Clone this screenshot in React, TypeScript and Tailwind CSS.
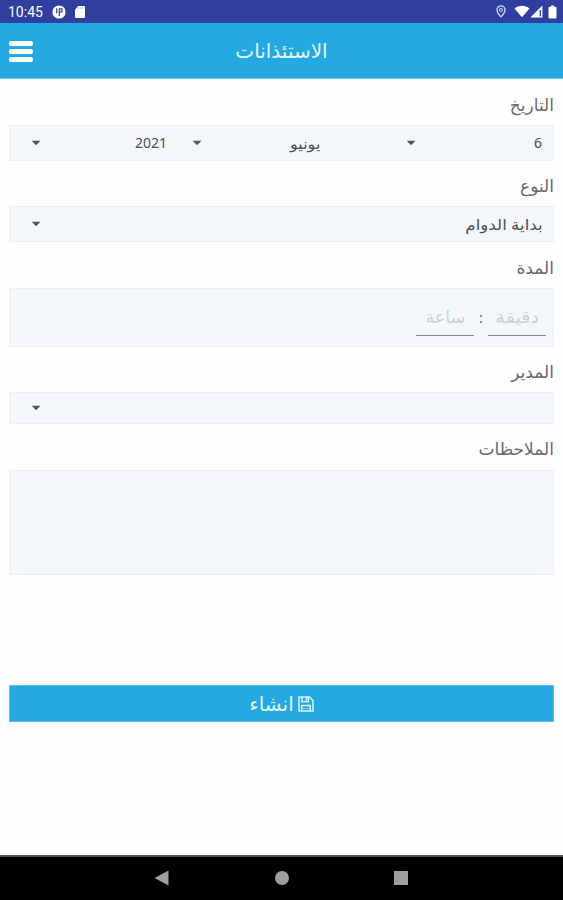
import React from 'react';

interface SelectProps {
  value?: string;
  className: string;
  textClass?: string;
}

const Caret = () => (
  <svg className="w-[10px] h-[6px] shrink-0" viewBox="0 0 10 6">
    <path d="M.7 .8h8.800L5.100 5.300z" fill="#50565b" />
  </svg>
);

const Select: React.FC<SelectProps> = ({ value, className, textClass = '' }) => (
  <div className={`flex items-center justify-between h-full text-[#4b4f52] ${className}`}>
    <span className={`leading-none whitespace-nowrap origin-right ${textClass}`}>{value}</span>
    <Caret />
  </div>
);

interface FieldProps {
  label: string;
  labelClass: string;
  boxClass: string;
  children?: React.ReactNode;
}

const Field: React.FC<FieldProps> = ({ label, labelClass, boxClass, children }) => (
  <div>
    <div className={`flex items-center text-[17px] text-[#66696b] leading-none ${labelClass}`}>
      <span className="origin-right">{label}</span>
    </div>
    <div className={`flex bg-[#f3f7fa] border border-[#ecf0f3] ${boxClass}`}>{children}</div>
  </div>
);

interface TimeInputProps {
  hint: string;
  hintClass: string;
}

const TimeInput: React.FC<TimeInputProps> = ({ hint, hintClass }) => (
  <div className="mt-[11px] h-[36px] w-[58px] pb-[3px] border-b border-[#858a8d] flex items-center justify-center text-[17px] leading-none text-[#cbd0d3]">
    <span className={hintClass}>{hint}</span>
  </div>
);

const StatusBar = () => (
  <div dir="ltr" className="h-[23px] bg-[#303f9f] flex items-center justify-between pl-2 pr-[6px] text-white">
    <div className="flex items-center">
      <span className="w-[44px] font-['Roboto',sans-serif] text-[14px] leading-none pt-px">10:45</span>
      <svg className="w-[14px] h-[14px]" viewBox="0 0 14 14">
        <circle cx="7" cy="7" r="6.600" fill="#fff" />
        <path d="M4.700 3.200v5M7.300 11V3.800H10v3.100H7.300" fill="none" stroke="#303f9f" strokeWidth="1.200" />
      </svg>
      <svg className="w-[12px] h-[14px] ml-2" viewBox="0 0 12 14">
        <path d="M4.300 1H10a1 1 0 0 1 1 1v10a1 1 0 0 1-1 1H2a1 1 0 0 1-1-1V4.400z" fill="#fff" />
        <path d="M4.700 2.400v1.300M6.700 2.400v1.300M8.700 2.400v1.300" stroke="#7d87c4" strokeWidth="0.800" />
      </svg>
    </div>
    <div className="flex items-center">
      <svg className="w-[10px] h-[13px] mr-[8px]" viewBox="0 0 10 13">
        <path d="M5 .9a4 4 0 0 0-4 4c0 2.700 4 7 4 7s4-4.300 4-7a4 4 0 0 0-4-4z" fill="none" stroke="#d6daf0" strokeWidth="1.300" />
        <circle cx="5" cy="4.900" r="1.500" fill="none" stroke="#d6daf0" />
      </svg>
      <svg className="w-[16px] h-[13px]" viewBox="0 0 16 13">
        <path d="M.5 3.400C4.700-.2 11.300-.2 15.500 3.400L8 12.300z" fill="#fff" />
      </svg>
      <svg className="w-[13px] h-[13px] mr-[5px]" viewBox="0 0 13 13">
        <path d="M12.400.5v12H.4z" fill="#fff" />
        <path d="M10.300 5v6.200" stroke="#303f9f" strokeWidth="1.300" />
      </svg>
      <svg className="w-[9px] h-[14px]" viewBox="0 0 9 14">
        <path d="M3 .5h3v1.200h1.500a1 1 0 0 1 1 1v9.800a1 1 0 0 1-1 1h-6a1 1 0 0 1-1-1V2.700a1 1 0 0 1 1-1H3z" fill="#fff" />
      </svg>
    </div>
  </div>
);

const Header = () => (
  <div dir="ltr" className="h-[56px] bg-[#24a9e2] border-b border-[#6fc5eb] grid grid-cols-[1fr_auto_1fr] items-center px-[9px]">
    <div className="flex flex-col gap-[3px] w-[24px] pt-px">
      <div className="h-[5px] rounded-[2px] bg-white" />
      <div className="h-[5px] rounded-[2px] bg-white" />
      <div className="h-[5px] rounded-[2px] bg-white" />
    </div>
    <div dir="rtl" className="text-[20px] leading-none pt-px text-[#e3f5fd]">الاستئذانات</div>
  </div>
);

const SaveIcon = () => (
  <svg className="w-[16px] h-[16px]" viewBox="0 0 16 16" fill="none" stroke="#d8f1fb" strokeWidth="1.600">
    <path d="M1 1h10.500L15 4.500V15H1z" strokeLinejoin="round" />
    <path d="M4 1v4.800h6.500V1M3.800 15V9.500h8.400V15" />
    <path d="M8.600 1.500v3.300" strokeWidth="2" />
    <path d="M4.500 12.500h7" strokeWidth="1" opacity="0.500" />
  </svg>
);

const NavBar = () => (
  <div dir="ltr" className="h-[45px] bg-black border-t-2 border-[#555] flex items-center pb-px pl-[154px] pr-[155px] justify-between">
    <svg className="w-[15px] h-[16px]" viewBox="0 0 15 16">
      <path d="M.5 8 14.500.5v15z" fill="#9e9e9e" />
    </svg>
    <div className="w-[14px] h-[14px] rounded-full bg-[#9e9e9e]" />
    <div className="w-[14px] h-[14px] bg-[#9e9e9e]" />
  </div>
);

const App: React.FC = () => {
  return (
    <div dir="rtl" className="w-[563px] h-[900px] flex flex-col overflow-hidden bg-[#fefefe] font-['Noto_Sans','DejaVu_Sans',sans-serif]">
      <StatusBar />
      <Header />
      <div className="flex-1 px-[9px]">
        <Field label="التاريخ" labelClass="h-[46px] pt-1" boxClass="h-[36px]">
          <Select value="6" className="w-[221px] pr-[11px] pl-[74px]" textClass="text-[14px]" />
          <Select value="يونيو" className="w-[153px] pr-3 pl-[13px]" textClass="text-[15px] scale-x-[1.07]" />
          <Select value="2021" className="flex-1 pr-3 pl-[21px]" textClass="text-[14px]" />
        </Field>
        <Field label="النوع" labelClass="h-[45px] pt-1" boxClass="h-[36px]">
          <Select value="بداية الدوام" className="flex-1 pr-[10px] pl-[21px]" textClass="text-[15px] scale-x-[1.11]" />
        </Field>
        <Field label="المدة" labelClass="h-[46px] pt-1" boxClass="h-[59px] pr-[7px]">
          <TimeInput hint="دقيقة" hintClass="scale-x-[1.14]" />
          <div className="w-[14px] pt-[22px] text-center text-[14px] leading-none text-[#66696b]">:</div>
          <TimeInput hint="ساعة" hintClass="scale-x-[1.03]" />
        </Field>
        <Field label="المدير" labelClass="h-[45px] pt-1" boxClass="h-[32px]">
          <Select className="flex-1 pl-[21px]" />
        </Field>
        <Field label="الملاحظات" labelClass="h-[46px] pt-[2px]" boxClass="h-[105px]" />
        <button className="mt-[110px] w-full h-[37px] bg-[#24a9e2] border border-[#5fbfea] flex items-center justify-center gap-[4px]">
          <SaveIcon />
          <span className="text-[20px] leading-none text-[#e3f5fd]">انشاء</span>
        </button>
      </div>
      <NavBar />
    </div>
  );
};

export default App;
